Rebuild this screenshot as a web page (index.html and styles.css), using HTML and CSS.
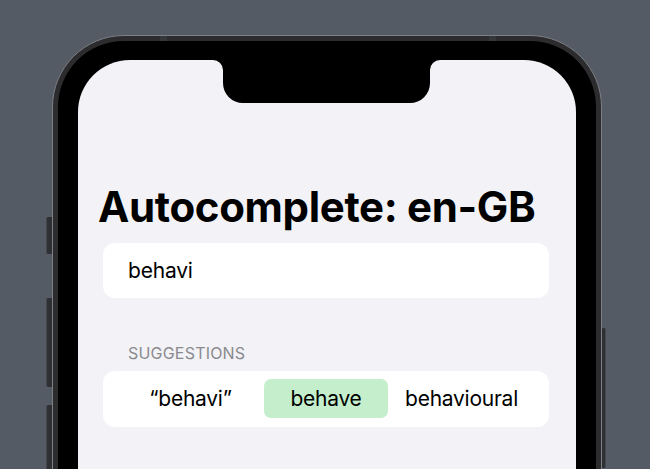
FILE: index.html
```html
<!DOCTYPE html>
<html lang="en">
<head>
<meta charset="utf-8">
<title>Autocomplete: en-GB</title>
<link rel="stylesheet" href="styles.css">
</head>
<body>
<div class="phone">
  <span class="btn btn-l1"></span>
  <span class="btn btn-l2"></span>
  <span class="btn btn-l3"></span>
  <span class="btn btn-r"></span>
  <span class="antenna antenna-l"></span>
  <span class="antenna antenna-r"></span>
  <div class="bezel">
    <div class="screen">
      <svg class="notch" width="227" height="43" viewBox="0 0 227 43" aria-hidden="true">
        <path d="M0 0 H227 A10 10 0 0 0 217 10 V23 A20 20 0 0 1 197 43 H30 A20 20 0 0 1 10 23 V10 A10 10 0 0 0 0 0 Z" fill="#000"/>
      </svg>
      <h1 class="title">Autocomplete: en-GB</h1>
      <div class="card input-card">behavi</div>
      <div class="section-header">SUGGESTIONS</div>
      <div class="card suggest">
        <div class="chip">“behavi”</div>
        <div class="chip chip-selected">behave</div>
        <div class="chip">behavioural</div>
      </div>
    </div>
  </div>
</div>
</body>
</html>
```
FILE: styles.css
```css
html, body {
  margin: 0;
  padding: 0;
}
body {
  background: #545b65;
  width: 650px;
  height: 469px;
  overflow: hidden;
  box-sizing: border-box;
  padding: 35px 0 0 52px;
  font-family: "Inter", "Noto Sans", sans-serif;
  -webkit-font-smoothing: antialiased;
}
.phone {
  position: relative;
  width: 550px;
  height: 620px;
  box-sizing: border-box;
  border: 1px solid #7c7f84;
  background: #2c2c2e;
  border-radius: 72px;
  padding: 5px;
}
.btn {
  position: absolute;
  background: #2e3033;
  border-left: 1px solid #44474b;
}
.btn-l1 { left: -7px; width: 5px; top: 181px; height: 37px; border-radius: 2px 0 0 2px; }
.btn-l2 { left: -7px; width: 5px; top: 262px; height: 89px; border-radius: 2px 0 0 2px; }
.btn-l3 { left: -7px; width: 5px; top: 369px; height: 120px; border-radius: 2px 0 0 2px; }
.btn-r {
  right: -5px; width: 3px; top: 292px; height: 140px;
  border-left: none;
  border-right: 1px solid #44474b;
  border-radius: 0 2px 2px 0;
}
.antenna {
  position: absolute;
  top: 0;
  width: 7px;
  height: 5px;
  background: #36373a;
}
.antenna-l { left: 107px; }
.antenna-r { left: 436px; }
.bezel {
  background: #000;
  border-radius: 66px;
  padding: 19px 20px 20px;
  height: 100%;
  box-sizing: border-box;
}
.screen {
  position: relative;
  background: #f2f2f7;
  border-radius: 52px;
  height: 100%;
  overflow: hidden;
  padding-top: 126px;
  box-sizing: border-box;
}
.notch {
  position: absolute;
  left: 135px;
  top: 0;
  display: block;
}
.title {
  margin: 0 0 0 20px;
  font-size: 42px;
  line-height: 42px;
  font-weight: 700;
  color: #000;
  letter-spacing: -0.35px;
}
.card {
  background: #fff;
  border-radius: 12px;
  margin: 0 27px 0 25px;
}
.input-card {
  margin-top: 15px;
  height: 55px;
  line-height: 55px;
  padding-left: 25px;
  font-size: 21px;
  letter-spacing: -0.2px;
  color: #000;
}
.section-header {
  margin: 45px 0 0 50px;
  font-size: 16px;
  line-height: 20px;
  letter-spacing: 0.2px;
  color: #8a8a8e;
}
.suggest {
  margin-top: 8px;
  display: grid;
  grid-template-columns: repeat(3, 124.5px);
  column-gap: 11px;
  justify-content: center;
  padding: 8px 0 9px;
}
.chip {
  height: 39px;
  line-height: 39px;
  text-align: center;
  font-size: 21px;
  letter-spacing: -0.25px;
  color: #000;
  border-radius: 7px;
  white-space: nowrap;
}
.chip-selected {
  background: #c5efcc;
}
```
